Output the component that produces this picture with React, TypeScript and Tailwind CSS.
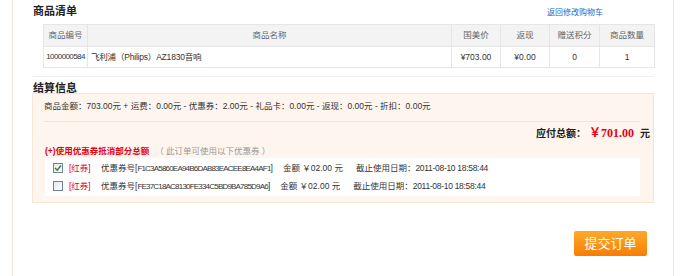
const cjk = '"Liberation Sans", "Noto Sans CJK SC", sans-serif';

function Check({ on }: { on?: boolean }) {
  return (
    <span className="flex h-[10px] w-[10px] items-center justify-center border border-[#6f8196] bg-gradient-to-br from-[#e4e8ee] to-white">
      {on && (
        <svg width="8" height="8" viewBox="0 0 8 8">
          <path d="M1 4 L3.2 6.2 L7 1.6" fill="none" stroke="#2f8a1e" strokeWidth="1.5" />
        </svg>
      )}
    </span>
  );
}

const coupons = [
  { on: true, code: "F1C3A5860EA94B6DAB83EACEE8EA4AF1" },
  { on: false, code: "FE37C18AC8130FE334C5BD9BA785D9A6" },
];

export default function App() {
  return (
    <div className="h-[276px] w-[683px] overflow-hidden bg-white text-[8.5px] text-[#333]" style={{ fontFamily: cjk }}>
      <div className="ml-[12px] h-full w-[662px] border-x border-[#f3e8de] pl-[20px] pr-[19px]">
        {/* 商品清单 */}
        <div className="border-b border-[#f0f0f0] pb-[8px]">
          <div className="flex h-[24px] items-center justify-between pb-[1px]">
            <h2 className="text-[11px] font-bold text-[#222]">商品清单</h2>
            <a className="mr-[51px] mt-[2px] text-[8px] text-[#2a68c8]">返回修改购物车</a>
          </div>
          <table className="ml-[10px] w-[611px] table-fixed border-collapse text-center">
            <colgroup>
              <col className="w-[44px]" />
              <col className="w-[364px]" />
              <col className="w-[49px]" />
              <col className="w-[49px]" />
              <col className="w-[50px]" />
              <col className="w-[55px]" />
            </colgroup>
            <thead>
              <tr className="h-[22px] bg-[#f3f3f3] text-[#666]">
                {["商品编号", "商品名称", "国美价", "返现", "赠送积分", "商品数量"].map((h) => (
                  <th key={h} className="border border-[#e6e6e6] font-normal">
                    {h}
                  </th>
                ))}
              </tr>
            </thead>
            <tbody>
              <tr className="h-[21px]">
                <td className="overflow-visible whitespace-nowrap border border-[#e6e6e6] text-[8px] tracking-[-0.6px]">1000000584</td>
                <td className="border border-[#e6e6e6] pl-[3px] text-left tracking-[-0.2px]">飞利浦（Philips）AZ1830音响</td>
                <td className="border border-[#e6e6e6]">¥703.00</td>
                <td className="border border-[#e6e6e6]">¥0.00</td>
                <td className="border border-[#e6e6e6]">0</td>
                <td className="border border-[#e6e6e6]">1</td>
              </tr>
            </tbody>
          </table>
        </div>

        {/* 结算信息 */}
        <h2 className="mt-[6px] h-[10px] text-[11px] leading-[10px] font-bold text-[#222]">结算信息</h2>
        <div className="-ml-[1px] w-[622px] border border-[#f6e6d6] bg-[#fdf5ee] pb-[6px] pl-[11px] pr-[13px] pt-[7px]">
          <div className="border-b border-[#f3e4d6] pb-[10px] leading-[10px]">
            商品金额：703.00元 + 运费：0.00元 - 优惠券：2.00元 - 礼品卡：0.00元 - 返现：0.00元 - 折扣：0.00元
          </div>
          <div className="-mr-[10px] mt-[5px] text-right text-[10px] font-bold leading-[12px] text-[#222]">
            应付总额：
            <span className="ml-[3px] text-[12px] text-[#e60012]" style={{ fontFamily: '"Liberation Serif", "Noto Sans CJK SC", serif' }}>
              ￥701.00
            </span>
            <span className="ml-[6px]">元</span>
          </div>
          <div className="mt-[6px] pl-[1px] leading-[10px]">
            <span className="font-bold text-[#e60012]">(+)使用优惠券抵消部分总额</span>
            <span className="ml-[6px] text-[#999]">（ 此订单可使用以下优惠券 ）</span>
          </div>
          <div className="ml-[1px] mt-[2px] flex flex-col gap-[6px] bg-white px-[8px] py-[4px]">
            {coupons.map((c) => (
              <div key={c.code} className="flex h-[12px] items-center whitespace-nowrap">
                <Check on={c.on} />
                <span className="ml-[6px] w-[32px] text-[#e60012]">[红券]</span>
                <span>
                  优惠券号[<span className="text-[8px] tracking-[-0.8px]">{c.code}</span>]
                </span>
                <span className="ml-[10px]">金额 ￥02.00 元</span>
                <span className="ml-[13px]">
                  截止使用日期：<span className="tracking-[-0.3px]">2011-08-10 18:58:44</span>
                </span>
              </div>
            ))}
          </div>
        </div>

        <div className="mt-[28px] flex justify-end pr-[7px]">
          <button className="h-[25px] w-[73px] rounded-[2px] bg-gradient-to-b from-[#ffa928] to-[#f77d00] text-[13px] text-white">
            提交订单
          </button>
        </div>
      </div>
    </div>
  );
}
